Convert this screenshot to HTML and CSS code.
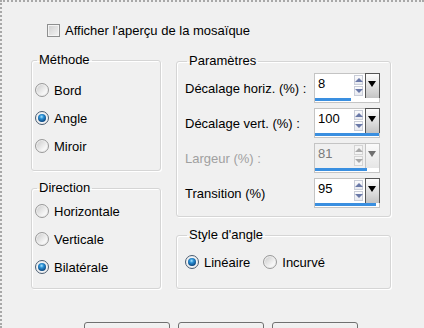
FILE: index.html
```html
<!DOCTYPE html>
<html lang="fr">
<head>
  <meta charset="UTF-8" />
  <meta name="viewport" content="width=device-width, initial-scale=1.0" />
  <title>Mosaïque - antique</title>
  <link rel="stylesheet" href="styles.css">
</head>
<body>
  <div class="dialog">
    <div class="preview"><span class="check"></span>Afficher l'aperçu de la mosaïque</div>

    <div class="columns">
      <div class="col left">
        <fieldset class="group method">
          <legend>Méthode</legend>
          <div class="radio-row"><span class="radio"></span>Bord</div>
          <div class="radio-row"><span class="radio on"></span>Angle</div>
          <div class="radio-row"><span class="radio"></span>Miroir</div>
        </fieldset>

        <fieldset class="group direction">
          <legend>Direction</legend>
          <div class="radio-row"><span class="radio"></span>Horizontale</div>
          <div class="radio-row"><span class="radio"></span>Verticale</div>
          <div class="radio-row"><span class="radio on"></span>Bilatérale</div>
        </fieldset>
      </div>

      <div class="col right">
        <fieldset class="group params">
          <legend>Paramètres</legend>
          <div class="param">
            <span>Décalage horiz. (%) :</span>
            <div class="spin">
              <span class="value">8</span>
              <span class="arrows"><i class="up"></i><i class="down"></i></span>
              <span class="drop"></span>
              <span class="bar"><b style="width: 56%"></b></span>
            </div>
          </div>
          <div class="param">
            <span>Décalage vert. (%) :</span>
            <div class="spin">
              <span class="value">100</span>
              <span class="arrows"><i class="up"></i><i class="down"></i></span>
              <span class="drop"></span>
              <span class="bar"><b style="width: 100%"></b></span>
            </div>
          </div>
          <div class="param disabled">
            <span>Largeur (%) :</span>
            <div class="spin">
              <span class="value">81</span>
              <span class="arrows"><i class="up"></i><i class="down"></i></span>
              <span class="drop"></span>
              <span class="bar"><b style="width: 81%"></b></span>
            </div>
          </div>
          <div class="param">
            <span>Transition (%)</span>
            <div class="spin">
              <span class="value">95</span>
              <span class="arrows"><i class="up"></i><i class="down"></i></span>
              <span class="drop"></span>
              <span class="bar"><b style="width: 95%"></b></span>
            </div>
          </div>
        </fieldset>

        <fieldset class="group style">
          <legend>Style d'angle</legend>
          <div class="inline-radios">
            <div class="radio-row"><span class="radio on"></span>Linéaire</div>
            <div class="radio-row"><span class="radio"></span>Incurvé</div>
          </div>
        </fieldset>
      </div>
    </div>

    <div class="buttons">
      <button aria-label="OK"></button>
      <button aria-label="Annuler"></button>
      <button aria-label="Aide"></button>
    </div>
  </div>
</body>
</html>
```

FILE: styles.css
```css
html, body {
  margin: 0;
  height: 100%;
  overflow: hidden;
}

body {
  background: #f0f0f0;
  font-family: 'Liberation Sans', Arial, sans-serif;
  font-size: 13px;
  color: #000;
}

.dialog {
  box-sizing: border-box;
  height: 100%;
  border-top: 2px dotted #a8a8a8;
  border-left: 2px dotted #a8a8a8;
  padding: 20px 0 0 29px;
}

.preview {
  display: flex;
  align-items: center;
  gap: 5px;
  height: 17px;
  margin-left: 16px;
}

.check {
  width: 11px;
  height: 11px;
  border: 1px solid #8e8f8f;
  background: linear-gradient(135deg, #cfcfcf, #f4f4f4);
  box-shadow: inset 0 0 0 1px #f4f4f4;
}

.columns {
  display: flex;
  gap: 15px;
  margin-top: 13px;
}

.col {
  display: flex;
  flex-direction: column;
}

.left { width: 130px; }
.right { width: 215px; margin-top: 1px; }

.group {
  box-sizing: border-box;
  margin: 0;
  border: 1px solid #d5d5d5;
  border-radius: 3px;
  box-shadow: inset 1px 1px 0 #fff, 1px 1px 0 #fff;
  padding: 0 3px;
}

.group legend {
  margin-left: 2px;
  padding: 0 2px;
  line-height: 16px;
}

.method { padding-top: 8px; padding-bottom: 10px; }
.direction { margin-top: 9px; padding-top: 1px; padding-bottom: 7px; }
.params { padding: 4px 10px 8px 8px; }
.style { margin-top: 10px; padding: 5px 8px 12px 8px; }

.radio-row {
  display: flex;
  align-items: center;
  gap: 5px;
  height: 28px;
}

.inline-radios {
  display: flex;
  gap: 13px;
}

.radio {
  position: relative;
  box-sizing: border-box;
  width: 14px;
  height: 14px;
  border-radius: 50%;
  border: 1px solid #999;
  background: linear-gradient(135deg, #c8c8c8, #f6f6f6 70%);
  box-shadow: inset 0 0 0 1px #efefef;
}

.radio.on {
  border-color: #4a5c70;
  background: #f4f6f8;
}

.radio.on::after {
  content: "";
  position: absolute;
  left: 2px;
  top: 2px;
  width: 8px;
  height: 8px;
  border-radius: 50%;
  background: radial-gradient(circle at 45% 35%, #a8e4ff 0, #2a8fd4 30%, #0c467f 75%, #082e55 100%);
}

.param {
  display: flex;
  align-items: center;
  justify-content: space-between;
  height: 30px;
}

.param + .param { margin-top: 5px; }

.spin {
  box-sizing: border-box;
  width: 66px;
  height: 30px;
  border: 1px solid #c4c4c4;
  background: #fff;
  display: grid;
  grid-template-columns: 1fr 11px 14px;
  grid-template-rows: 1fr 4px;
}

.spin .value {
  padding: 2px 0 0 3px;
  line-height: 15px;
}

.arrows {
  display: flex;
  flex-direction: column;
  gap: 1px;
  padding: 1px 2px 0 0;
}

.arrows i {
  box-sizing: border-box;
  display: flex;
  align-items: center;
  justify-content: center;
  height: 10px;
  border: 1px solid #c9cdd8;
  background: linear-gradient(#fbfbfd, #e8eaf0);
}

.arrows i::before {
  content: "";
  border-left: 4px solid transparent;
  border-right: 4px solid transparent;
}

.arrows .up::before { border-bottom: 4px solid #6a79a8; }
.arrows .down::before { border-top: 4px solid #6a79a8; }

.drop {
  position: relative;
  border: 1px solid #555;
  border-bottom: none;
  margin-top: -1px;
  margin-right: -1px;
  background: linear-gradient(#fdfdfd, #c4c4c4);
}

.drop::before {
  content: "";
  position: absolute;
  left: 2px;
  top: 7px;
  border-left: 4px solid transparent;
  border-right: 4px solid transparent;
  border-top: 6px solid #000;
}

.bar {
  grid-column: 1 / 4;
  background: #fff;
  padding-bottom: 1px;
}

.bar b {
  display: block;
  height: 3px;
  background: #3a8fe0;
}

.disabled { color: #a0a0a0; }
.disabled .spin { background: #f0f0f0; color: #7a7a7a; }
.disabled .arrows i { border-color: #d4d4d4; background: #f4f4f4; }
.disabled .arrows .up::before { border-bottom-color: #a8a8a8; }
.disabled .arrows .down::before { border-top-color: #a8a8a8; }
.disabled .drop { border-color: #c4c4c4; background: linear-gradient(#fafafa, #e6e6e6); }
.disabled .drop::before { border-top-color: #707070; }

.buttons {
  display: flex;
  gap: 8px;
  margin-top: 33px;
  padding-left: 53px;
}

.buttons button {
  width: 86px;
  height: 24px;
  border: 1px solid #707070;
  border-radius: 3px;
  background: linear-gradient(#f2f2f2, #e2e2e2);
  font: inherit;
}
```
